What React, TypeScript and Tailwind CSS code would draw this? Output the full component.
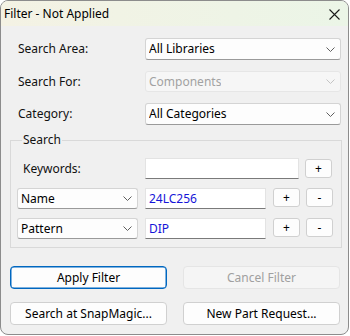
import React from "react";

const FONT = "font-['Segoe_UI','Noto_Sans',sans-serif] text-[12px] leading-[16px]";

const Chevron = ({ muted = false }: { muted?: boolean }) => (
  <svg width="9" height="5" viewBox="0 0 9 5" className="shrink-0">
    <path
      d="M0.5 0.5 L4.5 4.5 L8.5 0.5"
      fill="none"
      stroke={muted ? "#c4c4c4" : "#5f5f5f"}
      strokeWidth="1"
    />
  </svg>
);

const Select = ({
  value,
  disabled = false,
  className = "",
}: {
  value: string;
  disabled?: boolean;
  className?: string;
}) => (
  <div
    className={`flex items-center justify-between rounded-[3px] border pl-[3px] pr-[5px] ${
      disabled
        ? "border-[#e6e6e6] bg-[#f6f6f6] text-[#a2a2a2]"
        : "border-[#d4d4d4] border-b-[#9a9a9a] bg-[#fdfdfd] text-black"
    } ${className}`}
  >
    <span className="truncate">{value}</span>
    <Chevron muted={disabled} />
  </div>
);

const TextInput = ({ value = "", className = "" }: { value?: string; className?: string }) => (
  <div
    className={`flex items-center border border-[#e3e3e3] border-b-[#7a7a7a] bg-white pl-[3px] text-[#1515d8] ${className}`}
  >
    {value}
  </div>
);

const SmallButton = ({ label }: { label: string }) => (
  <button className="flex h-[19px] w-[27px] items-center justify-center rounded-[3px] border border-[#d0d0d0] bg-[#fdfdfd] text-black">
    {label}
  </button>
);

const Button = ({
  label,
  primary = false,
  disabled = false,
}: {
  label: string;
  primary?: boolean;
  disabled?: boolean;
}) => (
  <button
    className={`flex h-[23px] w-[157px] items-center justify-center rounded-[4px] border ${
      primary
        ? "border-[#0067c0] bg-[#fdfdfd] text-black shadow-[inset_0_0_0_0.5px_#0067c0]"
        : disabled
          ? "border-[#e5e5e5] bg-[#f5f5f5] text-[#a0a0a0]"
          : "border-[#d0d0d0] bg-[#fdfdfd] text-black"
    }`}
  >
    {label}
  </button>
);

export default function App() {
  return (
    <div className={`h-[336px] w-[350px] bg-white ${FONT}`}>
      <div className="flex h-[335px] w-[349px] flex-col overflow-hidden rounded-[8px] border border-[#8c8c8c] bg-[#f0f0f0]">
        {/* title bar */}
        <div className="flex h-[25px] shrink-0 items-center justify-between bg-gradient-to-r from-[#f4f2e4] to-[#ebf5e7] pl-[3px] pr-[8px] text-black">
          <span className="pt-[1px]">Filter - Not Applied</span>
          <svg width="11" height="11" viewBox="0 0 11 11" className="mt-[2px]">
            <path d="M0.5 0.5 L10.5 10.5 M10.5 0.5 L0.5 10.5" stroke="#1a1a1a" strokeWidth="1.1" />
          </svg>
        </div>

        {/* top fields */}
        <div className="mt-[12px] flex flex-col pl-[17px] text-[#111]">
          <div className="flex h-[22px] items-center">
            <span className="w-[127px]">Search Area:</span>
            <Select value="All Libraries" className="h-[22px] w-[196px]" />
          </div>
          <div className="mt-[11px] flex h-[21px] items-center">
            <span className="w-[127px]">Search For:</span>
            <Select value="Components" disabled className="h-[21px] w-[196px]" />
          </div>
          <div className="mt-[11px] flex h-[22px] items-center">
            <span className="w-[127px]">Category:</span>
            <Select value="All Categories" className="h-[22px] w-[196px]" />
          </div>
        </div>

        {/* search group */}
        <fieldset className="ml-[9px] mt-[7px] w-[332px] border border-[#d9d9d9] pb-[8px] pl-[6px] text-[#111]">
          <legend className="ml-[5px] px-[1px]">Search</legend>
          <div className="mt-[10px] flex h-[21px] items-start">
            <span className="flex h-[21px] w-[128px] items-center pl-[6px]">Keywords:</span>
            <TextInput className="h-[21px] w-[154px]" />
            <div className="ml-[6px] mt-[1px]">
              <SmallButton label="+" />
            </div>
          </div>
          <div className="mt-[9px] flex h-[21px] items-start gap-[7px]">
            <Select value="Name" className="h-[21px] w-[121px]" />
            <TextInput value="24LC256" className="h-[21px] w-[121px]" />
            <div className="flex gap-[6px]">
              <SmallButton label="+" />
              <SmallButton label="-" />
            </div>
          </div>
          <div className="mt-[9px] flex h-[21px] items-start gap-[7px]">
            <Select value="Pattern" className="h-[21px] w-[121px]" />
            <TextInput value="DIP" className="h-[21px] w-[121px]" />
            <div className="flex gap-[6px]">
              <SmallButton label="+" />
              <SmallButton label="-" />
            </div>
          </div>
        </fieldset>

        {/* action buttons */}
        <div className="ml-[9px] mt-[18px] flex gap-[16px]">
          <Button label="Apply Filter" primary />
          <Button label="Cancel Filter" disabled />
        </div>
        <div className="ml-[9px] mt-[13px] flex gap-[16px]">
          <Button label="Search at SnapMagic..." />
          <Button label="New Part Request..." />
        </div>
      </div>
    </div>
  );
}
